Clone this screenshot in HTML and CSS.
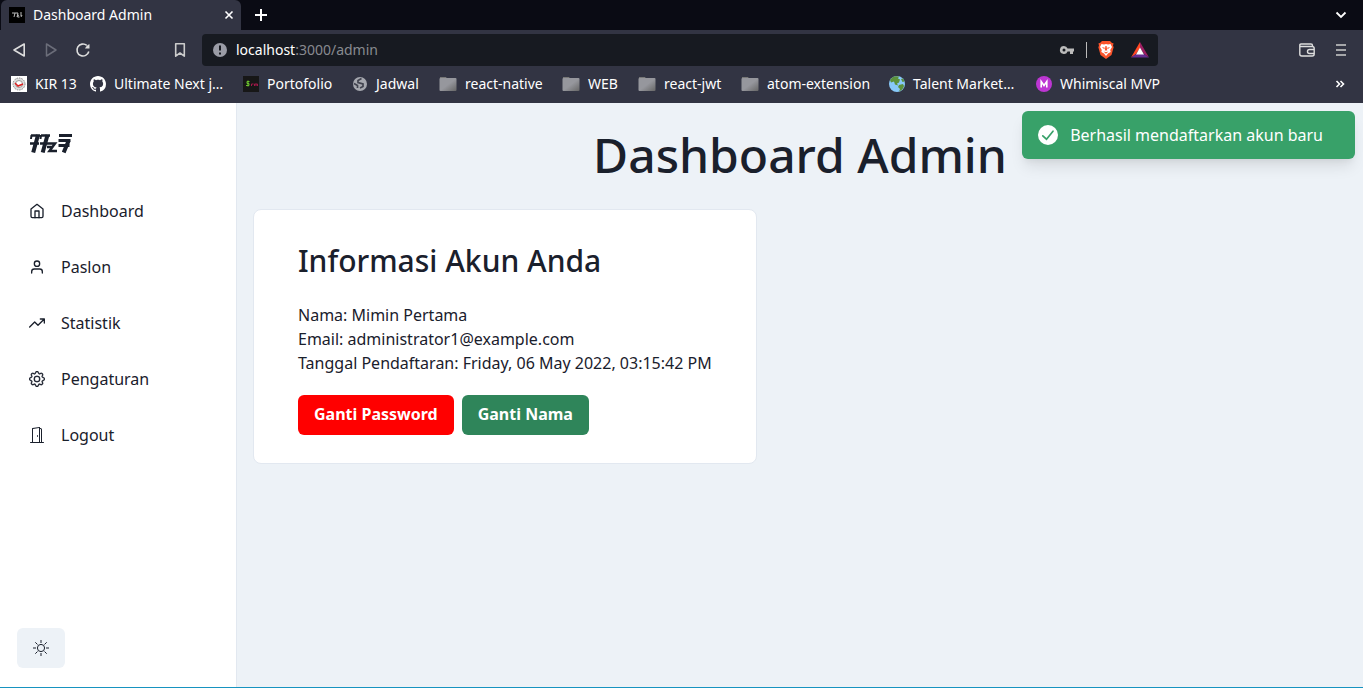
FILE: index.html
```html
<!DOCTYPE html>
<html lang="id">
<head>
<meta charset="utf-8">
<meta name="viewport" content="width=device-width, initial-scale=1">
<title>Dashboard Admin</title>
<link rel="stylesheet" href="styles.css">
</head>
<body>
<header class="browser">
  <div class="tabs">
    <div class="tab">
      <svg class="icon16" viewBox="0 0 16 16" aria-hidden="true"><path fill="#000" d="M0 0h16v16H0z"/><path d="M3 6h3L5 10M6 6h3L8 10M8.500 8h1l-1 2h2M11 6h2M11 8h2l-1 2" fill="none" stroke="#bbb"/></svg>
      <span class="tab-title">Dashboard Admin</span>
      <button class="plain" aria-label="Close tab"><svg class="icon10" viewBox="0 0 10 10"><path d="M1.500 1.500l7 7M8.500 1.500l-7 7" stroke="#fff" stroke-width="1.600"/></svg></button>
    </div>
    <button class="plain new-tab" aria-label="New tab"><svg class="icon12" viewBox="0 0 12 12"><path d="M6 0v12M0 6h12" stroke="#fff" stroke-width="2"/></svg></button>
    <button class="plain tab-search" aria-label="Search tabs"><svg class="icon12" viewBox="0 0 12 12"><path d="M1.500 3.500L6 8l4.500-4.500" fill="none" stroke="#fff" stroke-width="1.800"/></svg></button>
  </div>
  <div class="toolbar">
    <nav class="history" aria-label="History">
      <button class="plain" aria-label="Back"><svg class="icon16" viewBox="0 0 16 16"><path d="M13.200 2v12L3 8z" fill="none" stroke="#ddd" stroke-width="1.600" stroke-linejoin="round"/></svg></button>
      <button class="plain" aria-label="Forward"><svg class="icon16" viewBox="0 0 16 16"><path d="M3.500 2v12L13 8z" fill="none" stroke="#6b6d79" stroke-width="1.500" stroke-linejoin="round"/></svg></button>
      <button class="plain" aria-label="Reload"><svg class="icon16" viewBox="0 0 16 16"><path d="M13.800 9.500A6 6 0 1 1 11.800 3.400" fill="none" stroke="#ddd" stroke-width="1.600"/><path d="M10 6.500h4.500V2.200C13 2 11 4.500 10 6.500z" fill="#ddd"/></svg></button>
    </nav>
    <button class="plain bookmark-page" aria-label="Bookmark this page"><svg class="icon16" viewBox="0 0 16 16"><path d="M3.700 1.800h8.600v12.400L8 11l-4.300 3.200z" fill="none" stroke="#ccc" stroke-width="1.600" stroke-linejoin="round"/></svg></button>
    <div class="address">
      <svg class="icon16" viewBox="0 0 16 16" aria-hidden="true"><circle cx="8" cy="8" r="7" fill="#9a9ca6"/><path d="M8 3.500v5M8 10.500v2" stroke="#171a21" stroke-width="2"/></svg>
      <a class="url" href="#"><span class="host">localhost</span>:3000/admin</a>
      <button class="plain" aria-label="Passwords"><svg class="icon16" viewBox="0 0 16 16"><path fill="#bbb" fill-rule="evenodd" d="M5 4a4 4 0 1 0 3.600 5.500H11V12h3V9.500h1v-3H8.600A4 4 0 0 0 5 4zm0 2.500a1.500 1.500 0 1 1 0 3 1.500 1.500 0 0 1 0-3z"/></svg></button>
      <span class="divider"></span>
      <button class="plain" aria-label="Brave Shields"><svg class="icon18" viewBox="0 0 18 18"><path fill="#fb542b" d="M5 0h8l2 2 1.500.3L16 5l.7 1-2.200 8L9 18l-5.500-4-2.200-8L2 5l-.5-2.700L3 2z"/><path fill="#fff" d="M4.500 3l2.500.5 2-.5 2 .5 2.500-.5 1.500 3-1.800 3 .5 2-2.700 1.500L9 15l-2-2.500L4.300 11l.5-2L3 6z"/><path fill="#fb542b" d="M4.800 6l3 .8-.5 1.400zM13.200 6l-3 .8.500 1.400zM8.400 5h1.200l.6 4.500H7.800zM6.500 10.500l2.500.8 2.500-.8L9 12.800z"/></svg></button>
      <button class="plain rewards" aria-label="Brave Rewards"><svg class="icon18" viewBox="0 0 18 18"><path fill="#ff4724" d="M9 1v6L5 13l-5 3.500z"/><path fill="#9e1f63" d="M9 1l9 15.500L13 13 9 7z"/><path fill="#662d91" d="M0 16.500L5 13h8l5 3.500z"/><path fill="#fff" d="M9 6.500l4 7H5z"/></svg></button>
    </div>
    <div class="tools">
      <button class="plain" aria-label="Wallet"><svg class="icon16" viewBox="0 0 16 16"><path d="M13.500 4.500v-1q0-1.500-1.500-1.500H2Q.8 2 .8 3.200V12q0 2 2 2h10.400q2 0 2-2V6.500q0-2-2-2H1M15 7.500h-4.500a2 2 0 0 0 0 4H15" fill="none" stroke="#ddd" stroke-width="1.400"/></svg></button>
      <button class="plain" aria-label="Menu"><svg class="icon16" viewBox="0 0 16 16"><path d="M3 3h10M3 8h10M3 13h10" stroke="#ccc" stroke-width="1.700"/></svg></button>
    </div>
  </div>
  <nav class="bookmarks" aria-label="Bookmarks">
    <a href="#"><svg class="icon16" viewBox="0 0 16 16"><path fill="#fff" d="M0 0h16v16H0z"/><circle cx="8" cy="8" r="6" fill="#ddd" stroke="#888" stroke-dasharray="1.500 1"/><circle cx="8" cy="8" r="3.500" fill="#fff" stroke="#999"/><path d="M4 7l3 3 5-2" fill="none" stroke="#d22" stroke-width="1.500"/></svg><span>KIR 13</span></a>
    <a href="#"><svg class="icon16" viewBox="0 0 16 16"><path fill="#fff" d="M8 0C3.580 0 0 3.580 0 8c0 3.540 2.290 6.530 5.470 7.590.4.070.55-.17.55-.38 0-.19-.01-.82-.01-1.490-2.010.37-2.530-.49-2.690-.94-.09-.23-.48-.94-.82-1.130-.28-.15-.68-.52-.01-.53.63-.01 1.080.58 1.230.82.72 1.210 1.870.87 2.330.66.070-.52.280-.87.510-1.070-1.780-.2-3.640-.89-3.640-3.950 0-.87.310-1.590.82-2.150-.08-.2-.36-1.020.08-2.120 0 0 .67-.21 2.200.82.640-.18 1.320-.27 2-.27s1.360.09 2 .27c1.530-1.040 2.200-.82 2.200-.82.440 1.100.160 1.920.080 2.120.510.560.820 1.270.820 2.150 0 3.070-1.870 3.750-3.650 3.950.290.250.540.730.540 1.480 0 1.070-.01 1.930-.01 2.200 0 .210.150.460.550.380A8 8 0 0 0 16 8c0-4.420-3.580-8-8-8z"/></svg><span>Ultimate Next j…</span></a>
    <a href="#"><svg class="icon16" viewBox="0 0 16 16"><path fill="#171717" d="M0 0h16v16H0z"/><path d="M6.500 5.500H4v2h2v2H3M5 4.500v6" fill="none" stroke="#6bc22e"/><path d="M8.500 10V8h2M11.500 10V8h3v2M13 8v2" fill="none" stroke="#a01848"/></svg><span>Portofolio</span></a>
    <a href="#"><svg class="icon16" viewBox="0 0 16 16"><circle cx="8" cy="8" r="7" fill="#a6a8af"/><path d="M9.500 2.500L6 4.500v2l5 1.500v2.500L8 12M2 7.500l3.500 2V12" fill="none" stroke="#41434f" stroke-width="1.700"/></svg><span>Jadwal</span></a>
    <a href="#"><svg class="folder" viewBox="0 0 18 16"><use href="#folder"/></svg><span>react-native</span></a>
    <a href="#"><svg class="folder" viewBox="0 0 18 16"><use href="#folder"/></svg><span>WEB</span></a>
    <a href="#"><svg class="folder" viewBox="0 0 18 16"><use href="#folder"/></svg><span>react-jwt</span></a>
    <a href="#"><svg class="folder" viewBox="0 0 18 16"><defs><linearGradient id="grey" x2="1" y2="1"><stop stop-color="#96979d"/><stop offset=".5" stop-color="#96979d"/><stop offset="1" stop-color="#666"/></linearGradient><g id="folder"><path fill="#777" d="M1 1h6l1 1.500H1z"/><rect x="0.500" y="2" width="17" height="13" rx="1" fill="url(#grey)"/></g></defs><use href="#folder"/></svg><span>atom-extension</span></a>
    <a href="#"><svg class="icon16" viewBox="0 0 16 16"><circle cx="8" cy="8" r="8" fill="#88c9f9"/><path fill="#5c913b" d="M1 4Q4-1 10 .5l-1 2 2 1-1 3-2 1 1 2-3-1-1-3-3 1zM10 9l4-1 1 2q-1 4-5 5.500L11 13l-2-2zM12 3l2-.500 1.500 3-2 .500z"/></svg><span>Talent Market…</span></a>
    <a href="#"><svg class="icon16" viewBox="0 0 16 16"><circle cx="8" cy="8" r="8" fill="#bd36d3"/><path d="M5.200 11.500v-6L8 9.500l2.800-4v6" fill="none" stroke="#fff" stroke-width="1.600"/></svg><span>Whimiscal MVP</span></a>
    <button class="plain more" aria-label="More bookmarks"><svg class="icon10" viewBox="0 0 10 10"><path d="M1.500 2l3 3-3 3M5.500 2l3 3-3 3" fill="none" stroke="#fff" stroke-width="1.600"/></svg></button>
  </nav>
</header>
<div class="app">
  <aside class="sidebar">
    <a class="logo" href="#" aria-label="Home"><svg viewBox="0 0 44 24" fill="none" stroke="#1a202c"><path d="M2 4.500h9M12 4.500h9M1 12.500h9M11 12.500h8" stroke-width="2.600"/><path d="M9 4L4.200 21.500M18.500 4L13.700 21.500M39.500 10L34.700 21.500" stroke-width="4"/><path d="M2.500 4l-.5 4M12 4l-.5 4" stroke-width="2"/><path d="M19 12.500h7l-5.500 7.500H28M18 16h6" stroke-width="2.500"/><path d="M30 4.500h13M29.500 9.500h12M29.500 14.500h11" stroke-width="2.800"/></svg></a>
    <nav class="menu" aria-label="Menu">
      <a href="#"><svg class="icon16 line" viewBox="0 0 24 24"><path d="M3 9l9-7 9 7v11a2 2 0 0 1-2 2H5a2 2 0 0 1-2-2z"/><path d="M9 22V12h6v10"/></svg><span>Dashboard</span></a>
      <a href="#"><svg class="icon16 line" viewBox="0 0 24 24"><path d="M20 21v-2a4 4 0 0 0-4-4H8a4 4 0 0 0-4 4v2"/><circle cx="12" cy="7" r="4"/></svg><span>Paslon</span></a>
      <a href="#"><svg class="icon16 line" viewBox="0 0 24 24"><path d="M23 6l-9.500 9.500-5-5L1 18M17 6h6v6"/></svg><span>Statistik</span></a>
      <a href="#"><svg class="icon16 solid gear" viewBox="0 0 16 16"><path d="M8 4.754a3.246 3.246 0 1 0 0 6.492 3.246 3.246 0 0 0 0-6.492zM5.754 8a2.246 2.246 0 1 1 4.492 0 2.246 2.246 0 0 1-4.492 0z"/><path d="M9.796 1.343c-.527-1.790-3.065-1.790-3.592 0l-.094.319a.873.873 0 0 1-1.255.520l-.292-.160c-1.640-.892-3.433.902-2.540 2.541l.159.292a.873.873 0 0 1-.520 1.255l-.319.094c-1.790.527-1.790 3.065 0 3.592l.319.094a.873.873 0 0 1 .520 1.255l-.160.292c-.892 1.640.901 3.434 2.541 2.540l.292-.159a.873.873 0 0 1 1.255.520l.094.319c.527 1.790 3.065 1.790 3.592 0l.094-.319a.873.873 0 0 1 1.255-.520l.292.160c1.640.893 3.434-.902 2.540-2.541l-.159-.292a.873.873 0 0 1 .520-1.255l.319-.094c1.790-.527 1.790-3.065 0-3.592l-.319-.094a.873.873 0 0 1-.520-1.255l.160-.292c.893-1.640-.902-3.433-2.541-2.540l-.292.159a.873.873 0 0 1-1.255-.520l-.094-.319zm-2.633.283c.246-.835 1.428-.835 1.674 0l.094.319a1.873 1.873 0 0 0 2.693 1.115l.291-.160c.764-.415 1.600.420 1.184 1.185l-.159.292a1.873 1.873 0 0 0 1.116 2.692l.318.094c.835.246.835 1.428 0 1.674l-.319.094a1.873 1.873 0 0 0-1.115 2.693l.160.291c.415.764-.420 1.600-1.185 1.184l-.291-.159a1.873 1.873 0 0 0-2.693 1.116l-.094.318c-.246.835-1.428.835-1.674 0l-.094-.319a1.873 1.873 0 0 0-2.692-1.115l-.292.160c-.764.415-1.600-.420-1.184-1.185l.159-.291A1.873 1.873 0 0 0 1.945 8.930l-.319-.094c-.835-.246-.835-1.428 0-1.674l.319-.094A1.873 1.873 0 0 0 3.060 4.377l-.160-.292c-.415-.764.420-1.600 1.185-1.184l.292.159a1.873 1.873 0 0 0 2.692-1.115l.094-.319z"/></svg><span>Pengaturan</span></a>
      <a href="#"><svg class="icon16 solid" viewBox="0 0 16 16"><path d="M8.500 10c-.276 0-.500-.448-.500-1s.224-1 .500-1 .500.448.500 1-.224 1-.500 1z"/><path d="M10.828.122A.500.500 0 0 1 11 .500V1h.500A1.500 1.500 0 0 1 13 2.500V15h1.500a.500.500 0 0 1 0 1h-13a.500.500 0 0 1 0-1H3V1.500a.500.500 0 0 1 .430-.495l7-1a.500.500 0 0 1 .398.117zM11.500 2H11v13h1V2.500a.500.500 0 0 0-.500-.500zM4 1.934V15h6V1.077l-6 .857z"/></svg><span>Logout</span></a>
    </nav>
    <button class="theme" aria-label="Toggle theme"><svg class="icon16" viewBox="0 0 16 16" fill="none" stroke="#1a202c"><circle cx="8" cy="8" r="3.600"/><path d="M8 0v3M8 13v3M0 8h3M13 8h3M2.300 2.300l2.200 2.200M11.500 11.500l2.200 2.200M2.300 13.700l2.200-2.200M11.500 4.500l2.200-2.200"/></svg></button>
  </aside>
  <main class="content">
    <h1>Dashboard Admin</h1>
    <section class="card">
      <h2>Informasi Akun Anda</h2>
      <p>Nama: Mimin Pertama</p>
      <p>Email: administrator1@example.com</p>
      <p>Tanggal Pendaftaran: Friday, 06 May 2022, 03:15:42 PM</p>
      <div class="actions">
        <button class="btn danger">Ganti Password</button>
        <button class="btn success">Ganti Nama</button>
      </div>
    </section>
  </main>
  <div class="toast" role="status">
    <svg class="icon20" viewBox="0 0 20 20" aria-hidden="true"><circle cx="10" cy="10" r="10" fill="#fff"/><path d="M4.800 10.800l3.700 3.400 6.500-8" fill="none" stroke="#38a169" stroke-width="1.700" stroke-linecap="round"/></svg>
    <span>Berhasil mendaftarkan akun baru</span>
  </div>
</div>
</body>
</html>
```
FILE: styles.css
```css
* { box-sizing: border-box; }
body {
  margin: 0;
  min-height: 100vh;
  display: flex;
  flex-direction: column;
  font: 16px/24px "Noto Sans", sans-serif;
  color: #1a202c;
  background: #edf2f7;
  border-bottom: 1px solid #1793c0;
}
a { color: inherit; text-decoration: none; }
svg { display: block; flex: none; }
h1, h2, p { margin: 0; }
.icon10 { width: 10px; height: 10px; }
.icon12 { width: 12px; height: 12px; }
.icon16 { width: 16px; height: 16px; }
.icon18 { width: 18px; height: 18px; }
.icon20 { width: 20px; height: 20px; }
.folder { width: 18px; height: 16px; }
.plain { padding: 0; border: 0; background: none; flex: none; }

.browser { background: #323443; color: #fff; font-size: 14px; line-height: 20px; }
.tabs { display: flex; align-items: center; height: 30px; background: #0a0b14; }
.tab {
  display: flex;
  align-items: center;
  gap: 8px;
  width: 240px;
  height: 30px;
  margin-left: 1px;
  padding: 0 7px 0 8px;
  background: #323443;
  border-radius: 6px 6px 0 0;
}
.tab-title { flex: 1; }
.new-tab { margin-left: 14px; }
.tab-search { margin: 0 16px 0 auto; }
.toolbar { display: flex; align-items: center; height: 40px; padding: 0 14px 0 11px; }
.history { display: flex; gap: 16px; }
.bookmark-page { margin: 0 14px 0 81px; }
.address {
  display: flex;
  align-items: center;
  flex: 1;
  height: 32px;
  padding: 0 9px 0 10px;
  background: #171a21;
  border-radius: 4px;
}
.url { flex: 1; margin-left: 8px; color: #888a90; }
.host { color: #fff; }
.divider { width: 1px; height: 16px; margin: 0 10px 0 11px; background: #bbb; }
.rewards { margin-left: 16px; }
.tools { display: flex; gap: 18px; margin-left: 141px; }
.bookmarks {
  display: grid;
  grid-template-columns: 79px 153px 109px 87px 123px 76px 103px 148px 147px 1fr auto;
  align-items: center;
  height: 33px;
  padding: 0 18px 6px 11px;
}
.bookmarks a { display: flex; align-items: center; gap: 8px; white-space: nowrap; }

.app { display: flex; flex: 1; position: relative; }
.sidebar {
  display: flex;
  flex-direction: column;
  width: 237px;
  flex: none;
  padding: 28px 16px 19px;
  background: #fff;
  border-right: 1px solid #e2e8f0;
}
.logo { align-self: flex-start; margin-left: 13px; }
.logo svg { width: 44px; height: 24px; }
.menu { display: flex; flex-direction: column; gap: 16px; margin-top: 36px; }
.menu a { display: flex; align-items: center; gap: 16px; padding: 8px 13px; }
.line { fill: none; stroke: #1a202c; stroke-width: 2; stroke-linecap: round; stroke-linejoin: round; }
.solid { fill: #1a202c; }
.gear { stroke: #1a202c; stroke-width: .3; }
.theme {
  display: grid;
  place-items: center;
  width: 48px;
  height: 40px;
  margin: auto 0 0 1px;
  padding: 0;
  border: 0;
  border-radius: 6px;
  background: #edf2f7;
}
.content { flex: 1; padding: 16px; }
h1 { font-size: 48px; line-height: 72px; font-weight: 500; text-align: center; }
h2 { margin-bottom: 24px; font-size: 30px; line-height: 36px; font-weight: 500; }
.card {
  width: fit-content;
  max-width: 100%;
  margin-top: 18px;
  padding: 33px 44px 28px;
  background: #fff;
  border: 1px solid #e2e8f0;
  border-radius: 8px;
}
.actions { display: flex; flex-wrap: wrap; gap: 8px; margin-top: 20px; }
.btn {
  height: 40px;
  padding: 0 16px 2px;
  border: 0;
  border-radius: 6px;
  font: inherit;
  font-weight: 700;
  color: #fff;
}
.danger { background: #f00; }
.success { background: #2f855a; }
.toast {
  position: absolute;
  top: 8px;
  right: 8px;
  display: flex;
  align-items: center;
  gap: 12px;
  padding: 12px 32px 12px 16px;
  color: #fff;
  background: #38a169;
  border-radius: 6px;
  box-shadow: 0 10px 15px -3px rgba(0, 0, 0, .1), 0 4px 6px -2px rgba(0, 0, 0, .05);
}
```
